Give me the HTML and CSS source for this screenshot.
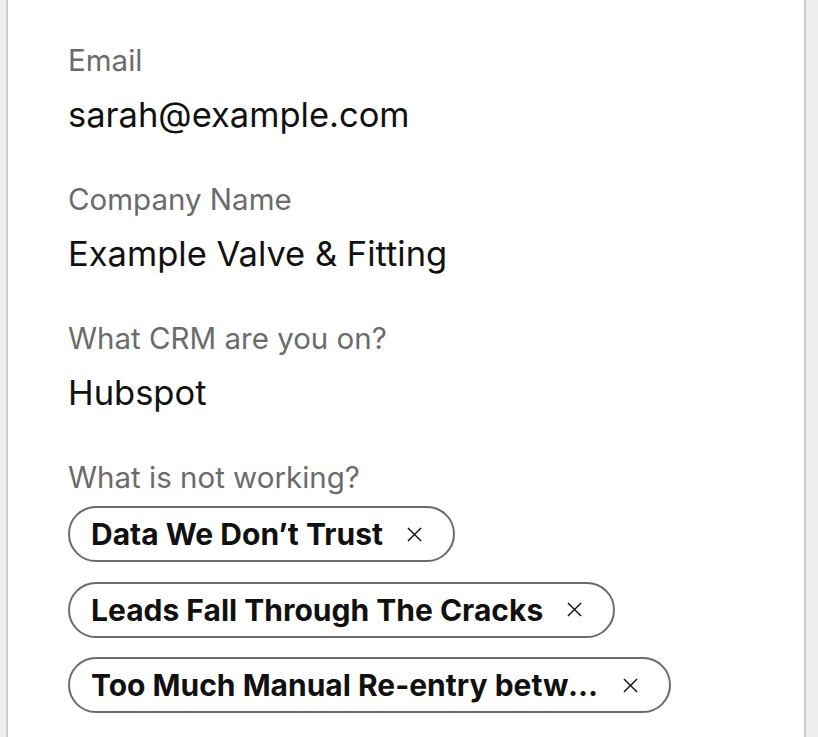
FILE: index.html
```html
<!DOCTYPE html>
<html lang="en">
<head>
    <meta charset="UTF-8">
    <meta name="viewport" content="width=device-width, initial-scale=1.0">
    <title>Contact details</title>
    <link rel="stylesheet" href="styles.css">
</head>
<body>

<div class="panel">
    <div class="field">
        <div class="field-label">Email</div>
        <div class="field-value">sarah@example.com</div>
    </div>

    <div class="field">
        <div class="field-label">Company Name</div>
        <div class="field-value">Example Valve &amp; Fitting</div>
    </div>

    <div class="field">
        <div class="field-label">What CRM are you on?</div>
        <div class="field-value">Hubspot</div>
    </div>

    <div class="field">
        <div class="field-label">What is not working?</div>
        <div class="tags">
            <div class="tag">
                <span class="tag-text">Data We Don’t Trust</span>
                <svg class="tag-remove" viewBox="0 0 16 16"><path d="M1 1 L15 15 M15 1 L1 15"/></svg>
            </div>
            <div class="tag">
                <span class="tag-text">Leads Fall Through The Cracks</span>
                <svg class="tag-remove" viewBox="0 0 16 16"><path d="M1 1 L15 15 M15 1 L1 15"/></svg>
            </div>
            <div class="tag">
                <span class="tag-text">Too Much Manual Re-entry between Systems</span>
                <svg class="tag-remove" viewBox="0 0 16 16"><path d="M1 1 L15 15 M15 1 L1 15"/></svg>
            </div>
        </div>
    </div>
</div>

</body>
</html>
```

FILE: styles.css
```css
body {
    margin: 0;
    background-color: #efefef;
    font-family: "Inter", "Liberation Sans", sans-serif;
}
.panel {
    width: 800px;
    min-height: 737px;
    margin-left: 6px;
    background: white;
    border-left: 2px solid #cccccc;
    border-right: 2px solid #cccccc;
    padding: 40px 0 0 60px;
    box-sizing: border-box;
}
.field {
    margin-bottom: 39px;
}
.field-label {
    font-size: 29.5px;
    line-height: 40px;
    color: #6b6b6b;
}
.field-value {
    font-size: 34.5px;
    line-height: 50px;
    margin-top: 10px;
    color: #111111;
}
.tags {
    display: flex;
    flex-direction: column;
    align-items: flex-start;
    gap: 19.5px;
    margin-top: 9px;
}
.tag {
    display: flex;
    align-items: center;
    height: 56px;
    box-sizing: border-box;
    border: 2px solid #6b6b6b;
    border-radius: 28px;
    padding: 0 31px 0 21px;
}
.tag-text {
    font-size: 30px;
    font-weight: 700;
    color: #111111;
    white-space: nowrap;
    overflow: hidden;
    text-overflow: ellipsis;
    max-width: 508px;
}
.tag-remove {
    width: 15px;
    height: 15px;
    margin-left: 24px;
    fill: none;
    stroke: #111111;
    stroke-width: 1.5;
}
```
